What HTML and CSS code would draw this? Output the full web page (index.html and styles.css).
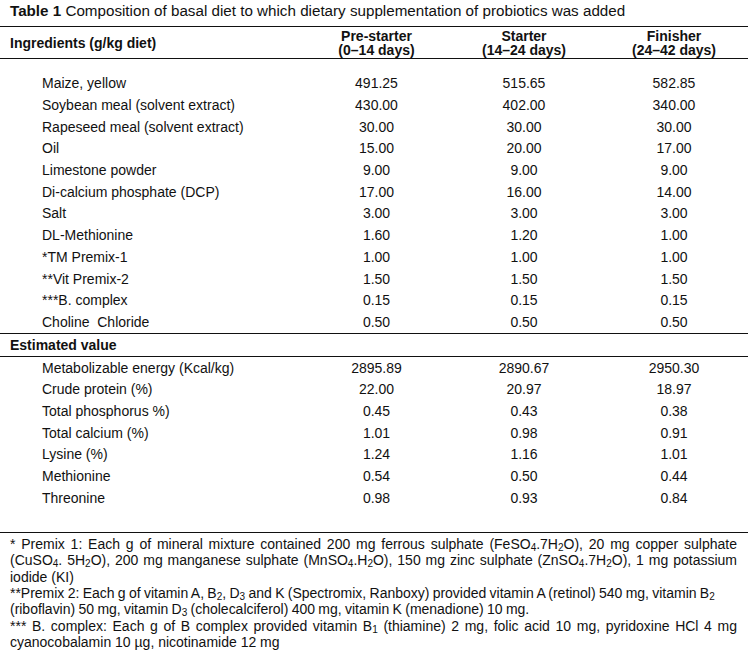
FILE: index.html
```html
<!DOCTYPE html>
<html lang="en">
<head>
<meta charset="utf-8">
<title>Table 1</title>
<link rel="stylesheet" href="styles.css">
</head>
<body>
<div class="page">
  <p class="title"><b>Table 1</b> Composition of basal diet to which dietary supplementation of probiotics was added</p>
  <table class="diet">
    <colgroup>
      <col class="c-name">
      <col class="c-pre">
      <col class="c-start">
      <col class="c-fin">
    </colgroup>
    <thead>
      <tr class="head">
        <th class="lead">Ingredients (g/kg diet)</th>
        <th>Pre-starter<br>(0–14 days)</th>
        <th>Starter<br>(14–24 days)</th>
        <th>Finisher<br>(24–42 days)</th>
      </tr>
    </thead>
    <tbody class="group">
      <tr class="gap"><td colspan="4"></td></tr>
      <tr><td class="name">Maize, yellow</td><td>491.25</td><td>515.65</td><td>582.85</td></tr>
      <tr><td class="name">Soybean meal (solvent extract)</td><td>430.00</td><td>402.00</td><td>340.00</td></tr>
      <tr><td class="name">Rapeseed meal (solvent extract)</td><td>30.00</td><td>30.00</td><td>30.00</td></tr>
      <tr><td class="name">Oil</td><td>15.00</td><td>20.00</td><td>17.00</td></tr>
      <tr><td class="name">Limestone powder</td><td>9.00</td><td>9.00</td><td>9.00</td></tr>
      <tr><td class="name">Di-calcium phosphate (DCP)</td><td>17.00</td><td>16.00</td><td>14.00</td></tr>
      <tr><td class="name">Salt</td><td>3.00</td><td>3.00</td><td>3.00</td></tr>
      <tr><td class="name">DL-Methionine</td><td>1.60</td><td>1.20</td><td>1.00</td></tr>
      <tr><td class="name">*TM Premix-1</td><td>1.00</td><td>1.00</td><td>1.00</td></tr>
      <tr><td class="name">**Vit Premix-2</td><td>1.50</td><td>1.50</td><td>1.50</td></tr>
      <tr><td class="name">***B. complex</td><td>0.15</td><td>0.15</td><td>0.15</td></tr>
      <tr><td class="name">Choline&nbsp; Chloride</td><td>0.50</td><td>0.50</td><td>0.50</td></tr>
    </tbody>
    <tbody class="group">
      <tr class="section"><th class="lead">Estimated value</th><td></td><td></td><td></td></tr>
    </tbody>
    <tbody class="group">
      <tr><td class="name">Metabolizable energy (Kcal/kg)</td><td>2895.89</td><td>2890.67</td><td>2950.30</td></tr>
      <tr><td class="name">Crude protein (%)</td><td>22.00</td><td>20.97</td><td>18.97</td></tr>
      <tr><td class="name">Total phosphorus %)</td><td>0.45</td><td>0.43</td><td>0.38</td></tr>
      <tr><td class="name">Total calcium (%)</td><td>1.01</td><td>0.98</td><td>0.91</td></tr>
      <tr><td class="name">Lysine (%)</td><td>1.24</td><td>1.16</td><td>1.01</td></tr>
      <tr><td class="name">Methionine</td><td>0.54</td><td>0.50</td><td>0.44</td></tr>
      <tr><td class="name">Threonine</td><td>0.98</td><td>0.93</td><td>0.84</td></tr>
      <tr class="gap-end"><td colspan="4"></td></tr>
    </tbody>
  </table>
  <div class="notes">
    <p class="just">* Premix 1: Each g of mineral mixture contained 200 mg ferrous sulphate (FeSO<sub>4</sub>.7H<sub>2</sub>O), 20 mg copper sulphate (CuSO<sub>4</sub>. 5H<sub>2</sub>O), 200 mg manganese sulphate (MnSO<sub>4</sub>.H<sub>2</sub>O), 150 mg zinc sulphate (ZnSO<sub>4</sub>.7H<sub>2</sub>O), 1 mg potassium iodide (KI)</p>
    <p class="narrow">**Premix 2: Each g of vitamin A, B<sub>2</sub>, D<sub>3</sub> and K (Spectromix, Ranboxy) provided vitamin A (retinol) 540 mg, vitamin B<sub>2</sub><br>(riboflavin) 50 mg, vitamin D<sub>3</sub> (cholecalciferol) 400 mg, vitamin K (menadione) 10 mg.</p>
    <p class="just">*** B. complex: Each g of B complex provided vitamin B<sub>1</sub> (thiamine) 2 mg, folic acid 10 mg, pyridoxine HCl 4 mg cyanocobalamin 10 µg, nicotinamide 12 mg</p>
  </div>
</div>
</body>
</html>
```

FILE: styles.css
```css
html, body {
  margin: 0;
  padding: 0;
  background: #fff;
}

body {
  font-family: "Liberation Sans", Arial, sans-serif;
  font-size: 14px;
  color: #111;
}

.page {
  width: 748px;
}

.title {
  margin: 0;
  padding: 2px 0 0 10px;
  height: 24px;
  line-height: 18px;
  font-size: 15.2px;
}

.title b {
  font-weight: bold;
}

.diet {
  width: 748px;
  border-collapse: collapse;
  table-layout: fixed;
}

.c-name { width: 305px; }
.c-pre { width: 143px; }
.c-start { width: 152px; }
.c-fin { width: 148px; }

.diet th,
.diet td {
  padding: 0;
  text-align: center;
  vertical-align: middle;
  line-height: 15px;
  font-weight: normal;
}

.diet thead tr {
  border-top: 1.5px solid #111;
  border-bottom: 1px solid #111;
}

.diet .head th {
  height: 31px;
  font-weight: bold;
  line-height: 14px;
}

.diet th.lead {
  text-align: left;
  padding-left: 10px;
  font-weight: bold;
}

.diet .group {
  border-bottom: 1px solid #111;
}

.diet tbody tr td {
  height: 21.7px;
}

.diet .gap td { height: 14px; }
.diet .gap-end td { height: 23px; }

.diet td.name {
  text-align: left;
  padding-left: 42px;
}

.diet .section th,
.diet .section td {
  height: 22px;
}

.notes {
  padding: 3px 11px 0 10px;
}

.notes p {
  margin: 0;
  line-height: 16.3px;
}

.notes .just {
  text-align: justify;
}

.notes .narrow {
  text-align: left;
  letter-spacing: -0.02px;
  word-spacing: -0.5px;
}

.notes sub {
  font-size: 10px;
  line-height: 0;
  vertical-align: -2px;
}
```
